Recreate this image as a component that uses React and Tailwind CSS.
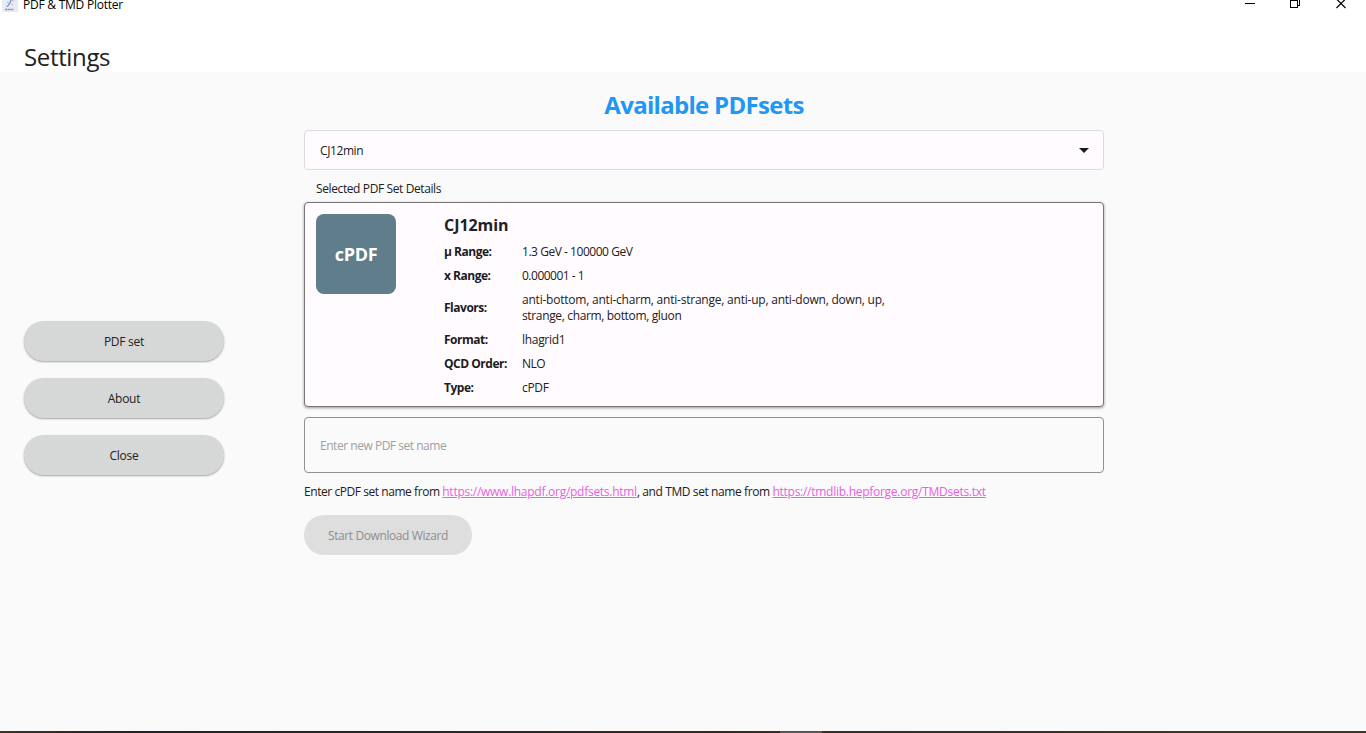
function Row({ label, children }) {
  return (
    <>
      <div className="font-bold tracking-[-0.48px] text-[#1c1b1f]">{label}</div>
      <div>{children}</div>
    </>
  );
}

function PillButton({ children }) {
  return (
    <button className="h-10 w-[200px] rounded-full bg-[#d6d7d7] pt-0.5 text-center tracking-[-0.25px] shadow-[0_1px_2px_rgba(0,0,0,0.35)]">
      {children}
    </button>
  );
}

export default function App() {
  return (
    <div className="flex h-[733px] w-[1366px] flex-col overflow-hidden bg-[#fafafa] font-['Open_Sans','Noto_Sans',sans-serif] text-[12px] leading-4 text-[#212121]">
      <header className="h-[72px] shrink-0 bg-white">
        <div className="flex h-4 items-start justify-between">
          <div className="flex items-start">
            <svg className="ml-0.5 h-3 w-4" viewBox="0 0 16 12">
              <rect width="16" height="12" fill="#e9eaf4" />
              <path d="M4.5 6.5C7 6 8 3 9 0" stroke="#5f8fc4" strokeWidth="1.2" fill="none" />
              <path d="M5 2.5C8 2 9 4 11 5" stroke="#a3bcdb" fill="none" />
              <path d="M10 0L12 1.5" stroke="#d3a0ac" />
              <path d="M3 9.5H11.5" stroke="#9596a0" strokeWidth="1.4" strokeDasharray="2.5 .4" />
            </svg>
            <span className="ml-[5px] leading-[10px] tracking-[-0.24px] text-black">PDF &amp; TMD Plotter</span>
          </div>
          <svg className="h-2.5 w-[121px]" viewBox="0 0 121 10" shapeRendering="crispEdges" fill="none" stroke="#000">
            <path d="M0 3.5H10M45.5 .5H52.5V7.5H45.5ZM54.5 0V5.5H53" />
            <path d="M91.5 -1L100.5 8M100.5 -1L91.5 8" strokeWidth="1.2" shapeRendering="auto" />
          </svg>
        </div>
        <h1 className="ml-6 mt-[25px] text-[24px] leading-8 tracking-[-0.35px]">Settings</h1>
      </header>

      <main className="flex h-[659px] shrink-0">
        <nav className="ml-6 flex w-[200px] flex-col gap-[17px] pt-[249px]">
          <PillButton>PDF set</PillButton>
          <PillButton>About</PillButton>
          <PillButton>Close</PillButton>
        </nav>

        <section className="ml-20 w-[800px] pt-[17px]">
          <h2 className="text-center text-[24px] font-bold leading-8 tracking-[-0.7px] text-[#2196f3]">Available PDFsets</h2>
          <div className="mt-[9px] flex h-10 items-center justify-between rounded border border-[#dcdbdd] bg-[#fffbfe] pl-[15px] pr-3.5">
            <span className="pt-0.5 tracking-[-0.4px]">CJ12min</span>
            <svg className="h-[5px] w-2.5" viewBox="0 0 10 5">
              <path d="M0 0H10L5 5Z" fill="#1c1b1f" />
            </svg>
          </div>
          <div className="ml-3 mt-[11px] tracking-[-0.39px]">Selected PDF Set Details</div>
          <div className="mt-[5px] flex h-[205px] rounded border border-[#777] bg-[#fffbfe] pl-[11px] pt-[11px] shadow-[0_1px_3px_rgba(0,0,0,0.4)]">
            <div className="flex size-20 items-center justify-center rounded-lg bg-[#607d8b] text-[18px] font-bold tracking-[-0.3px] text-white">cPDF</div>
            <div className="ml-12">
              <h3 className="-mt-px text-[16px] font-bold leading-6 tracking-[-0.05px]">CJ12min</h3>
              <div className="mt-[7px] grid grid-cols-[78px_400px] items-center gap-y-2">
                <Row label="µ Range:"><span className="tracking-[-0.46px]">1.3 GeV - 100000 GeV</span></Row>
                <Row label="x Range:"><span className="tracking-[-0.5px]">0.000001 - 1</span></Row>
                <Row label="Flavors:">
                  <span className="tracking-[-0.22px]">anti-bottom, anti-charm, anti-strange, anti-up, anti-down, down, up,</span>
                  <br />
                  <span className="tracking-[-0.35px]">strange, charm, bottom, gluon</span>
                </Row>
                <Row label="Format:"><span className="tracking-[-0.3px]">lhagrid1</span></Row>
                <Row label="QCD Order:"><span className="tracking-[-0.5px]">NLO</span></Row>
                <Row label="Type:"><span className="tracking-[-0.3px]">cPDF</span></Row>
              </div>
            </div>
          </div>
          <input
            className="mt-2.5 block h-14 w-full rounded border border-[#919191] bg-transparent px-[15px] pt-px tracking-[-0.47px] placeholder:text-[#a0a0a0]"
            placeholder="Enter new PDF set name"
          />
          <p className="mt-[11px] whitespace-nowrap tracking-[-0.44px]">
            Enter cPDF set name from <a className="tracking-[-0.27px] text-[#e860e0] underline">https://www.lhapdf.org/pdfsets.html</a>
            <span className="tracking-[-0.4px]">, and TMD set name from </span>
            <a className="tracking-[-0.27px] text-[#e860e0] underline">https://tmdlib.hepforge.org/TMDsets.txt</a>
          </p>
          <button className="mt-[15px] h-10 w-[168px] rounded-full bg-[#dedede] pt-0.5 tracking-[-0.41px] text-[#8e8e8e]">Start Download Wizard</button>
        </section>
      </main>

      <footer className="flex h-0.5 shrink-0 bg-linear-to-r from-[#3f332a] from-0% via-[#202124] via-10% to-[#3f332a] to-85%">
        <div className="ml-[780px] h-0.5 w-[42px] bg-[#565657]" />
      </footer>
    </div>
  );
}
